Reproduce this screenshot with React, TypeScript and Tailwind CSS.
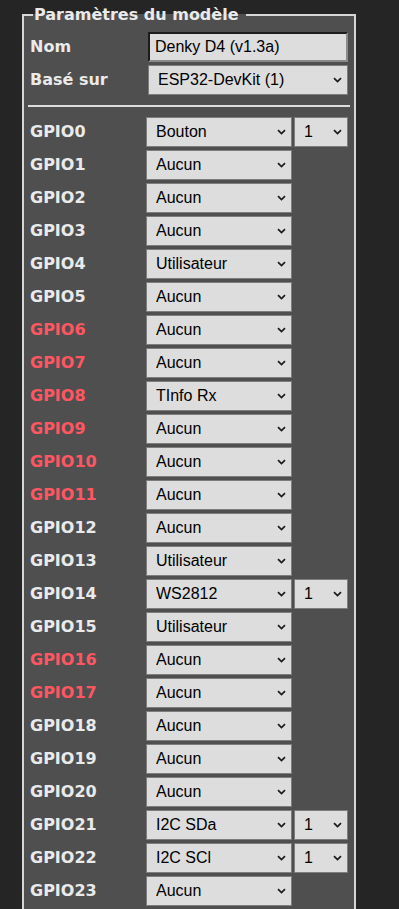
import React from "react";

type Row = { n: number; v: string; red?: boolean; idx?: boolean };

const rows: Row[] = [
  { n: 0, v: "Bouton", idx: true },
  { n: 1, v: "Aucun" },
  { n: 2, v: "Aucun" },
  { n: 3, v: "Aucun" },
  { n: 4, v: "Utilisateur" },
  { n: 5, v: "Aucun" },
  { n: 6, v: "Aucun", red: true },
  { n: 7, v: "Aucun", red: true },
  { n: 8, v: "TInfo Rx", red: true },
  { n: 9, v: "Aucun", red: true },
  { n: 10, v: "Aucun", red: true },
  { n: 11, v: "Aucun", red: true },
  { n: 12, v: "Aucun" },
  { n: 13, v: "Utilisateur" },
  { n: 14, v: "WS2812", idx: true },
  { n: 15, v: "Utilisateur" },
  { n: 16, v: "Aucun", red: true },
  { n: 17, v: "Aucun", red: true },
  { n: 18, v: "Aucun" },
  { n: 19, v: "Aucun" },
  { n: 20, v: "Aucun" },
  { n: 21, v: "I2C SDa", idx: true },
  { n: 22, v: "I2C SCl", idx: true },
  { n: 23, v: "Aucun" },
];

const Chevron = () => (
  <svg
    className="pointer-events-none absolute right-[6px] top-1/2 -translate-y-1/2"
    width="9"
    height="6"
    viewBox="0 0 9 6"
  >
    <path d="M1 1.2 L4.5 4.6 L8 1.2" fill="none" stroke="#1a1a1a" strokeWidth="1.7" />
  </svg>
);

const Sel = ({ value, w }: { value: string; w: string }) => (
  <div className={`relative h-[30px] ${w}`}>
    <select
      defaultValue={value}
      className="h-full w-full appearance-none rounded-none border border-[#7d7d7d] bg-[#dddddd] pl-[9px] pr-[18px] text-[16px] leading-[28px] text-black outline-none"
      style={{ fontFamily: '"Liberation Sans", Arial, sans-serif' }}
    >
      <option value={value}>{value}</option>
    </select>
    <Chevron />
  </div>
);

const labelFont = { fontFamily: '"DejaVu Sans", Verdana, sans-serif' };

export default function App() {
  return (
    <div className="min-h-[909px] overflow-hidden bg-[#252525] pl-[22px] pt-[6px]">
      <fieldset className="w-[334px] border-2 border-[#d6d6d6] bg-[#4f4f4f] px-[6px] pt-[8px] pb-[10px]">
        <legend
          className="ml-[3px] pl-[1px] pr-[7px] text-[16px] font-bold leading-[18px] text-[#eaeaea]"
          style={labelFont}
        >
          Paramètres du modèle
        </legend>

        <div className="flex h-[30px] items-center">
          <div className="w-[118px] text-[16px] font-bold text-[#eaeaea]" style={labelFont}>
            Nom
          </div>
          <input
            defaultValue="Denky D4 (v1.3a)"
            className="h-[30px] w-[200px] rounded-none border-2 border-t-[#1c1c1c] border-l-[#1c1c1c] border-r-[#8a8a8a] border-b-[#8a8a8a] bg-[#dddddd] pl-[5px] text-[16px] text-black outline-none"
            style={{ fontFamily: '"Liberation Sans", Arial, sans-serif' }}
          />
        </div>
        <div className="mt-[3px] flex h-[30px] items-center">
          <div className="w-[118px] text-[16px] font-bold text-[#eaeaea]" style={labelFont}>
            Basé sur
          </div>
          <Sel value="ESP32-DevKit (1)" w="w-[200px]" />
        </div>

        <div className="-mx-[2px] mt-[10px] mb-[10px] h-[2px] bg-[#dddddd]" />

        {rows.map((r, i) => (
          <div key={r.n} className={`flex h-[30px] items-center ${i > 0 ? "mt-[3px]" : ""}`}>
            <div
              className={`w-[116px] text-[16px] font-bold ${r.red ? "text-[#ff5661]" : "text-[#eaeaea]"}`}
              style={labelFont}
            >
              GPIO{r.n}
            </div>
            <Sel value={r.v} w="w-[146px]" />
            {r.idx && (
              <div className="ml-[2px]">
                <Sel value="1" w="w-[54px]" />
              </div>
            )}
          </div>
        ))}
      </fieldset>
    </div>
  );
}
